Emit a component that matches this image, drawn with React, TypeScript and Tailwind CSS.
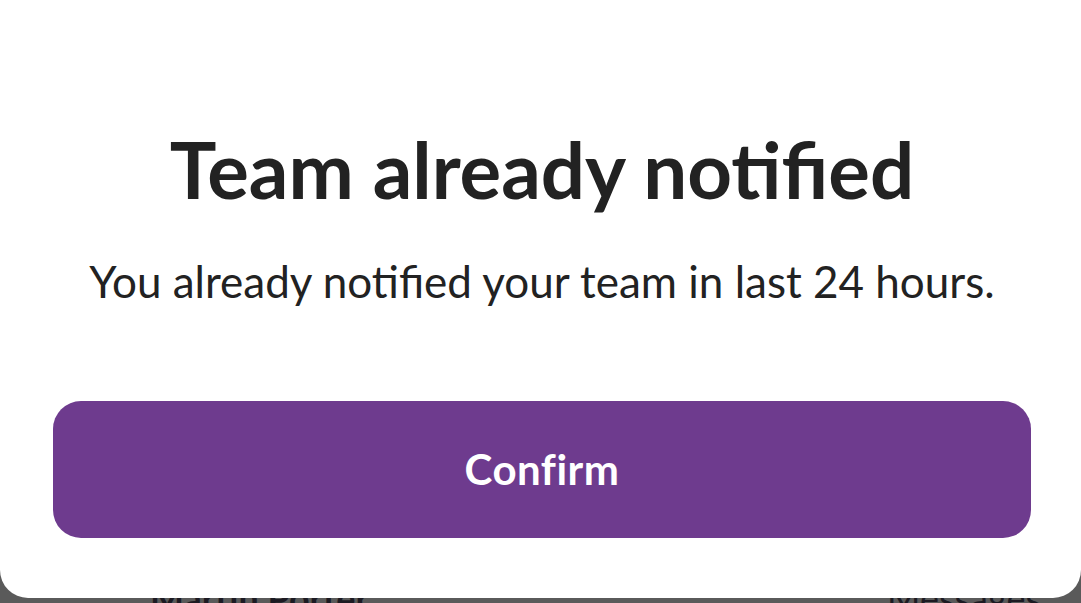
export default function App() {
  return (
    <div className="relative h-[603px] w-full overflow-hidden bg-[#5a5a5a] font-['Lato','Noto_Sans',sans-serif]">
      {/* list row behind the dialog */}
      <div className="flex h-full items-end justify-between pl-[150px] pr-[40px]">
        <span className="translate-y-[22px] text-[36px] font-bold text-[#1c1a22]">Martin Porter</span>
        <span className="translate-y-[22px] text-[36px] text-[#1c1a22]">Messages</span>
      </div>

      <div className="absolute left-0 right-0 top-[-40px] flex h-[638px] flex-col items-center rounded-[28px] bg-white pl-[53px] pr-[50px] pt-[170px]">
        <h1 className="text-[78px] font-bold leading-none text-[#222222]">Team already notified</h1>
        <p className="mt-[51px] text-[44px] leading-none text-[#222222]">
          You already notified your team in last 24 hours.
        </p>
        <button className="mt-[98px] flex h-[137px] w-full items-center justify-center rounded-[28px] bg-[#6e3b8e] text-[42px] font-bold tracking-[0.5px] text-white">
          Confirm
        </button>
      </div>
    </div>
  )
}
